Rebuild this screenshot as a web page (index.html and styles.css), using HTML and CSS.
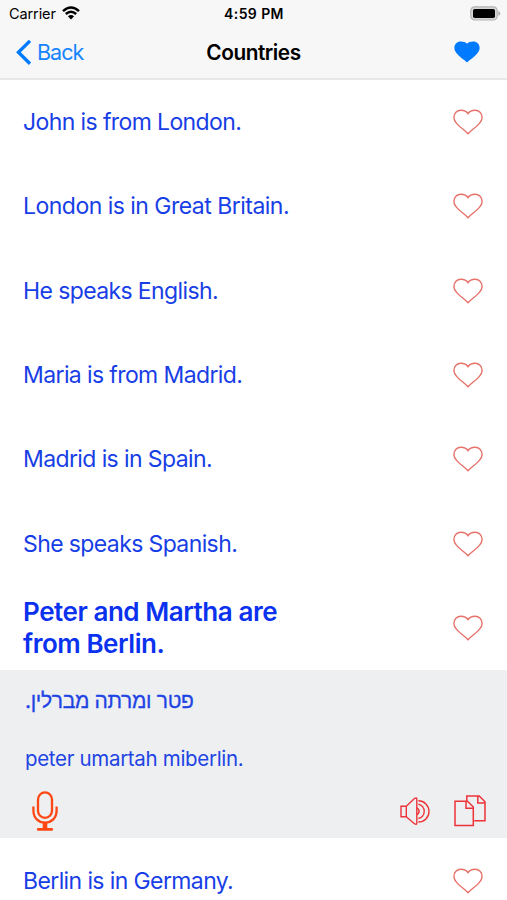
FILE: index.html
```
<!DOCTYPE html>
<html lang="en">
<head>
<meta charset="utf-8">
<title>Countries</title>
<link rel="stylesheet" href="styles.css">
</head>
<body>
<svg width="0" height="0" class="defs">
  <symbol id="heart" viewBox="0 0 30 26"><path d="M15 24.7C12 21.3 7 18.6 3.6 14.4C1.6 12 .9 10.2 .9 8.4C.9 4.2 4 1.2 7.9 1.2C11.3 1.2 13.6 2.4 15 4.6C16.4 2.4 18.7 1.2 22.1 1.2C26 1.2 29.1 4.2 29.1 8.4C29.1 10.2 28.4 12 26.4 14.4C23 18.6 18 21.3 15 24.7Z"/></symbol>
</svg>
<header class="top">
  <div class="status">
    <div class="carrier"><span>Carrier</span>
      <svg class="wifi" viewBox="0 0 18 14"><path d="M1 5.1Q9-2.1 17 5.1M3.8 8Q9 3.4 14.2 8" fill="none" stroke="#000" stroke-width="2.5"/><path d="M5.9 10.3Q9 7.6 12.1 10.3L9 13.5Z"/></svg>
    </div>
    <div class="time">4:59 PM</div>
    <svg class="battery" viewBox="0 0 31 15"><rect x=".8" y=".8" width="26.4" height="13.2" rx="3.8" fill="#d5d5d5" stroke="#b4b4b4" stroke-width="1.2"/><rect x="3" y="3" width="22" height="9" rx="1.8"/><path d="M28.3 5Q30.2 5.6 30.2 7.4T28.3 9.8Z" fill="#aaa"/></svg>
  </div>
  <nav class="nav">
    <div class="back"><svg viewBox="0 0 16 27"><path d="M14 1.9L2.4 13.3L14 24.7" fill="none" stroke="#007aff" stroke-width="3.3"/></svg><span>Back</span></div>
    <h1>Countries</h1>
    <svg class="fav" viewBox="0 0 26 22"><path d="M13 21.5C10 18.5 5.4 16 2.4 12C.8 10 .4 8.4.4 6.8C.4 3 3.2.4 6.7.4C9.6.4 11.8 1.2 13 2.8C14.2 1.2 16.4.4 19.3.4C22.8.4 25.6 3 25.6 6.8C25.6 8.4 25.2 10 23.6 12C20.6 16 16 18.5 13 21.5Z" fill="#007aff"/></svg>
  </nav>
</header>
<main>
  <div class="row"><span class="tight">John is from London.</span><svg class="heart"><use href="#heart"/></svg></div>
  <div class="row"><span>London is in Great Britain.</span><svg class="heart"><use href="#heart"/></svg></div>
  <div class="row"><span class="tight">He speaks English.</span><svg class="heart"><use href="#heart"/></svg></div>
  <div class="row"><span class="tight">Maria is from Madrid.</span><svg class="heart"><use href="#heart"/></svg></div>
  <div class="row"><span class="tight">Madrid is in Spain.</span><svg class="heart"><use href="#heart"/></svg></div>
  <div class="row"><span class="tight">She speaks Spanish.</span><svg class="heart"><use href="#heart"/></svg></div>
  <div class="row active"><span>Peter and Martha are<br>from Berlin.</span><svg class="heart"><use href="#heart"/></svg></div>
  <section class="detail">
    <p class="hebrew" lang="he" dir="rtl">פטר ומרתה מברלין.</p>
    <p class="latin">peter umartah miberlin.</p>
    <div class="tools">
      <svg class="mic" viewBox="0 0 26 40" fill="none" stroke="#ff4713" stroke-width="2.3"><rect x="6" y="1.4" width="14" height="25.4" rx="7"/><path d="M1.4 15.4V19.5C1.4 27 6.5 31.6 13 31.6S24.6 27 24.6 19.5V15.4"/><path d="M13 31.6V38" stroke-width="4.6"/><path d="M6.2 38.4H19.8" stroke-width="2.6" stroke-linecap="round"/></svg>
      <svg class="speaker" viewBox="0 0 30 29" fill="none" stroke="#ee3338" stroke-width="1.4"><path d="M1 9.2H6.3V19.7H1ZM6.3 9.2L14.4 1.5Q16.8.2 16.8 2.2V26.3Q16.8 28.2 14.4 26.7L6.3 19.7"/><path d="M16.8 11.2A3.3 3.3 0 0 1 16.8 17.5M18.4 7.2A7.3 7.3 0 0 1 18.4 21.5M18.4 3.8A10.6 10.6 0 0 1 18.4 25"/></svg>
      <svg class="copy" viewBox="0 0 32 32" fill="none" stroke="#ee3338" stroke-width="1.5"><path d="M1 6.2H13.5L19.3 12V30.6H1ZM12 6.2V13.2H19.3M12.8 6V1H25.2L31 6.8V25.8H20.3M23.8 1V8H31"/></svg>
    </div>
  </section>
  <div class="row"><span class="tight">Berlin is in Germany.</span><svg class="heart"><use href="#heart"/></svg></div>
</main>
</body>
</html>
```
FILE: styles.css
```
* { box-sizing: border-box; }
body {
  margin: 0;
  height: 900px;
  overflow: hidden;
  background: #fff;
  font-family: Inter, "Liberation Sans", sans-serif;
  color: #000;
}
svg { display: block; flex: none; }
.defs { position: absolute; }
.top { height: 80px; background: #f7f7f7; border-bottom: 2px solid #e7e7e7; }
.status {
  display: grid;
  grid-template-columns: 1fr auto 1fr;
  align-items: center;
  height: 27px;
  padding: 0 7px 0 9px;
  font-size: 14.5px;
}
.carrier { display: flex; align-items: center; gap: 6px; letter-spacing: -0.1px; }
.wifi { width: 18px; height: 14px; margin-top: -2px; }
.time { font-weight: 600; font-size: 14px; letter-spacing: 0.4px; margin-left: -1px; }
.battery { width: 31px; height: 15px; justify-self: end; margin: -1px -1px 0 0; }
.nav {
  display: grid;
  grid-template-columns: 1fr auto 1fr;
  align-items: center;
  height: 50px;
  padding: 0 27px;
}
.back { display: flex; align-items: center; gap: 5px; margin-left: -11px; font-size: 21.5px; letter-spacing: -1px; color: #1684ff; }
.back svg { width: 16px; height: 27px; }
h1 { margin: 0; font-size: 20.8px; font-weight: 600; letter-spacing: -0.45px; }
.fav { width: 26px; height: 22px; justify-self: end; }
.row {
  display: flex;
  align-items: center;
  justify-content: space-between;
  height: 84.3px;
  padding: 0 24.5px 0 23px;
  font-size: 23px;
  letter-spacing: -0.52px;
  color: #183ee6;
}
.tight { letter-spacing: -0.61px; }
.heart { width: 30px; height: 26px; fill: none; stroke: #e6726a; stroke-width: 1.4; }
.active { font-size: 26px; font-weight: 600; line-height: 32px; letter-spacing: -0.45px; color: #0a32ee; }
.detail { height: 168.4px; background: #edeff1; padding: 16px 21px 0 25px; color: #1f44e4; }
.detail p { margin: 0; width: max-content; line-height: 30px; }
.hebrew { font-size: 21px; letter-spacing: -0.33px; -webkit-text-stroke: 0.3px; }
.latin { font-size: 20.5px; letter-spacing: -0.32px; padding-top: 28px; }
.tools { display: flex; align-items: center; padding: 17px 0 0 7px; }
.mic { width: 26px; height: 40px; }
.speaker { width: 30px; height: 29px; margin-left: auto; }
.copy { width: 32px; height: 32px; margin-left: 24px; }
```
